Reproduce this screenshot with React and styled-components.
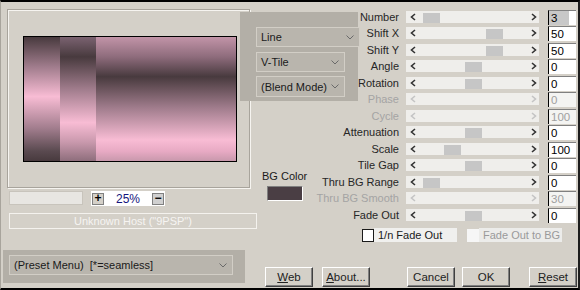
import React from 'react';
import styled, { createGlobalStyle } from 'styled-components';

const GlobalStyle = createGlobalStyle`
    html, body {
        margin:0;
        padding:0;
        background:#d4d0c8;
    }
    body {
        font-family: "Liberation Sans", Arial, sans-serif;
        font-size:11px;
    }
`

const DARK = '#483a3e';
const PINK = '#f8bcd4';
const MID = '#a07c8c';

const Window = styled.div`
    width:580px;
    height:290px;
    box-sizing:border-box;
    background:#d4d0c8;
    border-top:2px solid #000;
    border-bottom:2px solid #000;
    border-left:1px solid #a8a49c;
    border-right:2px solid #1c1c1c;
    display:flex;
    overflow:hidden;
    font-family:"Liberation Sans", Arial, sans-serif;
    font-size:11px;
    color:#1a1a1a;
`

const LeftCol = styled.div`
    width:239px;
    flex:none;
    display:flex;
    flex-direction:column;

    & > * {
        flex:none;
    }
`

const PreviewGroup = styled.div`
    box-sizing:border-box;
    margin:7px 0 0 6px;
    width:243px;
    height:179px;
    padding:26px 0 0 15px;
    border:1px solid #a8a49c;
    box-shadow: inset 1px 1px 0 #f6f4f0, 1px 1px 0 #f6f4f0;
`

const Preview = styled.div`
    width:214px;
    height:126px;
    box-sizing:border-box;
    border:1px solid #000;
    display:flex;
`

const Strip = styled.div`
    width:${p => p.$w ? p.$w + 'px' : 'auto'};
    flex:${p => p.$w ? 'none' : 1};
    background:${p => p.$bg};
`

const ZoomRow = styled.div`
    display:flex;
    gap:8px;
    margin:3px 0 0 8px;
    height:15px;
`

const ZoomTrack = styled.div`
    width:74px;
    height:14px;
    box-sizing:border-box;
    background:#e8e6e2;
    border:1px solid #c8c4bc;
`

const ZoomBox = styled.div`
    width:74px;
    height:15px;
    box-sizing:border-box;
    background:#fff;
    display:flex;
    align-items:center;
    justify-content:space-between;
    padding:0 1px;
`

const StepButton = styled.div`
    width:12px;
    height:12px;
    box-sizing:border-box;
    border:1px solid #808080;
    background:${p => p.$muted ? '#d0d0d0' : '#d4d0c8'};
    font-weight:bold;
    font-size:12px;
    line-height:9px;
    text-align:center;
    color:#000;
`

const ZoomValue = styled.span`
    color:#14147c;
    font-size:12px;
`

const HostLabel = styled.div`
    margin:7px 0 0 8px;
    width:248px;
    height:16px;
    box-sizing:border-box;
    border:1px solid #f4f2ee;
    color:#f6f4f2;
    text-align:center;
    line-height:14px;
`

const PresetPanel = styled.div`
    margin:21px 0 0 2px;
    width:242px;
    height:33px;
    box-sizing:border-box;
    background:#b3afa7;
    padding:5px 0 0 6px;
`

const Select = styled.div`
    width:${p => p.$w}px;
    height:${p => p.$h || 20}px;
    box-sizing:border-box;
    background:#b9b5ad;
    border:1px solid #d2cec6;
    display:flex;
    align-items:center;
    justify-content:space-between;
    padding:0 5px 0 4px;
    white-space:pre;
    color:#1a1a1a;
`

const RightCol = styled.div`
    flex:1;
    display:flex;
    flex-direction:column;
`

const TopGrid = styled.div`
    display:grid;
    grid-template-columns:65px 101px 142px 28px;
    grid-template-rows:repeat(6, 16px 17px) 16px;
    padding-top:7px;
`

const DropPanel = styled.div`
    grid-column:1 / 3;
    grid-row:1 / 8;
    align-self:start;
    justify-self:start;
    margin-top:3px;
    width:118px;
    height:89px;
    box-sizing:border-box;
    background:#b3afa7;
    padding:15px 0 0 16px;
    display:flex;
    flex-direction:column;
    gap:5px;

    & > *:last-child {
        margin-top:-1px;
    }
`

const BgBlock = styled.div`
    grid-column:1;
    grid-row:10 / 14;
    justify-self:start;
    padding:13px 0 0 22px;
    display:flex;
    flex-direction:column;
    align-items:center;
    white-space:nowrap;
`

const Swatch = styled.div`
    margin-top:4px;
    width:36px;
    height:15px;
    box-sizing:border-box;
    background:#4a3e44;
    border:1px solid;
    border-color:#808080 #fff #fff #808080;
`

const Label = styled.div`
    grid-column:2;
    grid-row:${p => p.$row};
    align-self:start;
    line-height:16px;
    text-align:right;
    padding-right:7px;
    white-space:nowrap;
    color:${p => p.$disabled ? '#a4a4a4' : '#262626'};
`

const Track = styled.div`
    grid-column:3;
    grid-row:${p => p.$row};
    align-self:start;
    margin-top:2px;
    position:relative;
    width:133px;
    height:12px;
    background:#efeeeb;
    display:flex;
    align-items:center;
    justify-content:space-between;
    padding:0 2px 0 4px;
    box-sizing:border-box;
`

const Thumb = styled.div`
    position:absolute;
    top:2px;
    width:17px;
    height:10px;
    background:#c6c6c6;
`

const Value = styled.div`
    grid-column:4;
    grid-row:${p => p.$row};
    align-self:start;
    margin-top:1px;
    height:15px;
    box-sizing:border-box;
    border-left:1px solid #000;
    border-top:1px solid #808080;
    padding-left:2px;
    line-height:14px;
    font-size:11.5px;
    color:${p => p.$disabled ? '#a0a0a0' : '#000'};
    background:${p => p.$selected
        ? 'linear-gradient(to right, #c8c8c8 20px, #fff 20px)'
        : p.$disabled ? '#f4f4f2' : '#fff'};
`

const CheckRow = styled.div`
    display:flex;
    align-items:center;
    margin-top:5px;
    padding-left:122px;
    height:14px;
    gap:10px;
`

const CheckItem = styled.div`
    display:flex;
    align-items:center;
`

const CheckBox = styled.div`
    width:12px;
    height:13px;
    box-sizing:border-box;
    background:${p => p.$disabled ? '#f6f6f6' : '#fff'};
    border:${p => p.$disabled ? 'none' : '1px solid #1a1a1a'};
`

const CheckLabel = styled.div`
    width:83px;
    height:14px;
    box-sizing:border-box;
    padding-left:4px;
    line-height:14px;
    white-space:nowrap;
    background:${p => p.$disabled ? '#ececea' : '#f0f0ee'};
    color:${p => p.$disabled ? '#9a9a9a' : '#1a1a1a'};
`

const ButtonRow = styled.div`
    display:flex;
    margin-top:25px;
    padding-left:25px;
    height:20px;
`

const Button = styled.div`
    width:48px;
    height:20px;
    flex:none;
    box-sizing:border-box;
    margin-left:${p => p.$ml || 0}px;
    background:#d4d0c8;
    border:1px solid;
    border-color:#fff #404040 #404040 #fff;
    box-shadow:inset -1px -1px 0 #808080;
    text-align:center;
    line-height:18px;
    font-size:11.5px;
    color:#222;
`

const Chevron = ({ color = '#6a6a6a' }) => (
    <svg width="8" height="5" viewBox="0 0 8 5">
        <polyline points="0.5,0.5 4,4 7.5,0.5" fill="none" stroke={color} strokeWidth="1" />
    </svg>
)

const Arrow = ({ dir, disabled }) => (
    <svg width="6" height="8" viewBox="0 0 6 8">
        <polyline
            points={dir === 'left' ? '5,1 1.5,4 5,7' : '1,1 4.5,4 1,7'}
            fill="none"
            stroke={disabled ? '#c4c4c4' : '#333'}
            strokeWidth="1.6"
        />
    </svg>
)

const rows = [
    { label: 'Number', value: '3', thumb: 17, selected: true },
    { label: 'Shift X', value: '50', thumb: 80 },
    { label: 'Shift Y', value: '50', thumb: 80 },
    { label: 'Angle', value: '0', thumb: 59 },
    { label: 'Rotation', value: '0', thumb: 59 },
    { label: 'Phase', value: '0', disabled: true },
    { label: 'Cycle', value: '100', disabled: true },
    { label: 'Attenuation', value: '0', thumb: 59 },
    { label: 'Scale', value: '100', thumb: 38 },
    { label: 'Tile Gap', value: '0', thumb: 59 },
    { label: 'Thru BG Range', value: '0', thumb: 17 },
    { label: 'Thru BG Smooth', value: '30', disabled: true },
    { label: 'Fade Out', value: '0', thumb: 59 },
];

const strip1 = `linear-gradient(to bottom, ${DARK} 0%, ${MID} 24%, ${PINK} 48%, ${MID} 74%, #5a4a50 92%, ${DARK} 100%)`;
const strip2 = `linear-gradient(to bottom, #7a6270 0%, ${DARK} 16%, ${MID} 42%, ${PINK} 69%, #c898ac 85%, #8e6e7c 100%)`;
const strip3 = `linear-gradient(to bottom, #c294a8 0%, #8e6c7c 16%, ${DARK} 32%, ${MID} 57%, ${PINK} 83%, #e8aac4 92%, #c898ac 100%)`;

export default function App() {
    return (
        <>
            <GlobalStyle />
            <Window>
                <LeftCol>
                    <PreviewGroup>
                        <Preview>
                            <Strip $w={36} $bg={strip1} />
                            <Strip $w={36} $bg={strip2} />
                            <Strip $bg={strip3} />
                        </Preview>
                    </PreviewGroup>
                    <ZoomRow>
                        <ZoomTrack />
                        <ZoomBox>
                            <StepButton>+</StepButton>
                            <ZoomValue>25%</ZoomValue>
                            <StepButton $muted>−</StepButton>
                        </ZoomBox>
                    </ZoomRow>
                    <HostLabel>Unknown Host ("9PSP")</HostLabel>
                    <PresetPanel>
                        <Select $w={224}>
                            <span>(Preset Menu)  [*=seamless]</span>
                            <Chevron />
                        </Select>
                    </PresetPanel>
                </LeftCol>
                <RightCol>
                    <TopGrid>
                        <DropPanel>
                            <Select $w={104}><span>Line</span><Chevron /></Select>
                            <Select $w={89}><span>V-Tile</span><Chevron /></Select>
                            <Select $w={89} $h={21}><span>(Blend Mode)</span><Chevron /></Select>
                        </DropPanel>
                        <BgBlock>
                            <span>BG Color</span>
                            <Swatch />
                        </BgBlock>
                        {rows.map((r, i) => (
                            <React.Fragment key={r.label}>
                                <Label $row={i + 1} $disabled={r.disabled}>{r.label}</Label>
                                <Track $row={i + 1}>
                                    <Arrow dir="left" disabled={r.disabled} />
                                    {!r.disabled && <Thumb style={{ left: r.thumb }} />}
                                    <Arrow dir="right" disabled={r.disabled} />
                                </Track>
                                <Value $row={i + 1} $disabled={r.disabled} $selected={r.selected}>{r.value}</Value>
                            </React.Fragment>
                        ))}
                    </TopGrid>
                    <CheckRow>
                        <CheckItem>
                            <CheckBox />
                            <CheckLabel>1/n Fade Out</CheckLabel>
                        </CheckItem>
                        <CheckItem>
                            <CheckBox $disabled />
                            <CheckLabel $disabled>Fade Out to BG</CheckLabel>
                        </CheckItem>
                    </CheckRow>
                    <ButtonRow>
                        <Button><u>W</u>eb</Button>
                        <Button $ml={9}><u>A</u>bout...</Button>
                        <Button $ml={37}>Cancel</Button>
                        <Button $ml={7}>OK</Button>
                        <Button $ml={19}><u>R</u>eset</Button>
                    </ButtonRow>
                </RightCol>
            </Window>
        </>
    );
}
